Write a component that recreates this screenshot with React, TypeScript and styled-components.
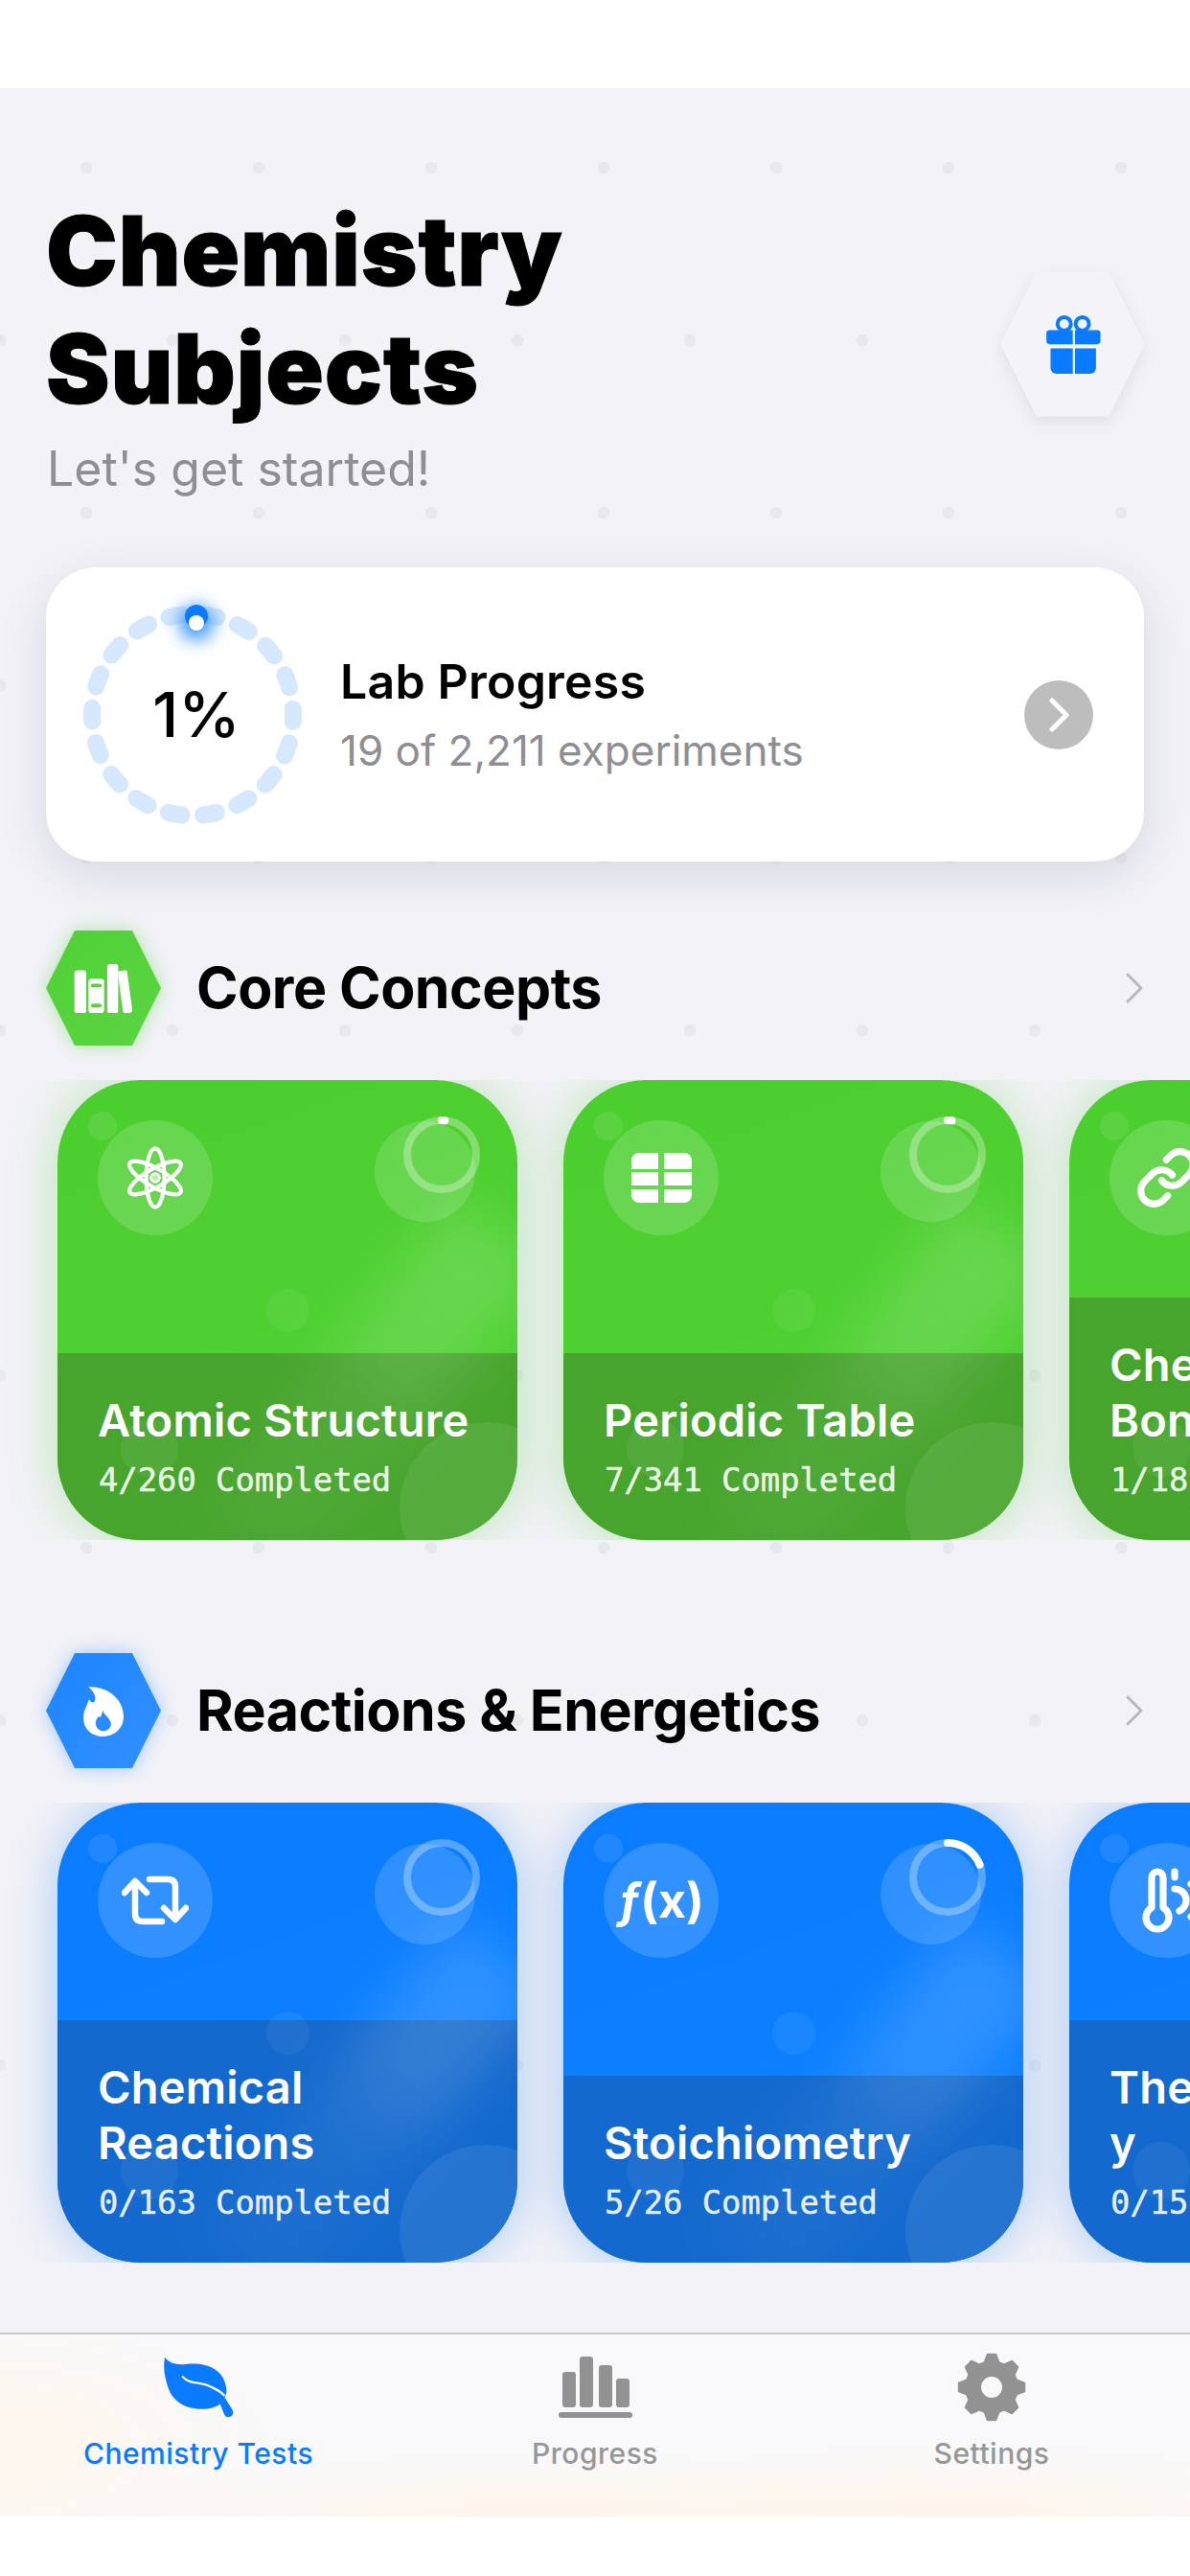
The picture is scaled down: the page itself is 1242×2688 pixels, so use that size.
import React from "react";
import styled, { createGlobalStyle } from "styled-components";
import { Link, ThermometerSun } from "lucide-react";

const Global = createGlobalStyle`
  html, body { margin: 0; padding: 0; background: #fff; }
  * { box-sizing: border-box; }
`;

const sans = `Inter, "Noto Sans", "Liberation Sans", sans-serif`;
const mono = `"DejaVu Sans Mono", "Liberation Mono", monospace`;
const hexClip = "polygon(25% 0, 75% 0, 100% 50%, 75% 100%, 25% 100%, 0 50%)";

const Page = styled.div`
  width: 1242px;
  height: 2688px;
  display: flex;
  flex-direction: column;
  background: #fff;
  padding-top: 92px;
  overflow: hidden;
  font-family: ${sans};
`;
const Main = styled.main`
  height: 2342px;
  padding-top: 108px;
  display: flex;
  flex-direction: column;
  background-color: #f2f2f7;
  background-image:
    radial-gradient(circle at 90px 83px, #e8e8ef 6px, transparent 6.6px),
    radial-gradient(circle at 90px 263px, #e8e8ef 6px, transparent 6.6px);
  background-size: 180px 360px, 180px 360px;
  background-position: 0 0, -90px 0;
`;
const Header = styled.header`
  display: flex;
  align-items: center;
  justify-content: space-between;
  padding: 0 47px 0 48px;
`;
const Title = styled.h1`
  margin: 0;
  font-size: 100px;
  line-height: 123px;
  font-weight: 900;
  letter-spacing: 0.9px;
  -webkit-text-stroke: 1px #000;
  color: #000;
`;
const Subtitle = styled.p`
  margin: 14px 0 0 1px;
  font-size: 50px;
  line-height: 58px;
  font-weight: 400;
  color: #8e8e93;
`;
const HexShadow = styled.div<{ $glow: string }>`
  flex-shrink: 0;
  filter: ${(p) => p.$glow};
`;
const Hex = styled.div<{ $size: number; $bg: string }>`
  width: ${(p) => p.$size}px;
  height: ${(p) => p.$size}px;
  clip-path: ${hexClip};
  background: ${(p) => p.$bg};
  display: flex;
  align-items: center;
  justify-content: center;
`;
const ProgressCard = styled.section`
  margin: 74px 48px 0;
  height: 307px;
  border-radius: 52px;
  background: #fff;
  box-shadow: 0 14px 50px rgba(50, 50, 90, 0.13);
  display: flex;
  align-items: center;
  padding: 0 53px 0 39px;
`;
const RingBox = styled.div`
  position: relative;
  width: 228px;
  height: 228px;
  flex-shrink: 0;
  display: flex;
  align-items: center;
  justify-content: center;
`;
const RingSvg = styled.svg`
  position: absolute;
  inset: 0;
  overflow: visible;
`;
const Percent = styled.span`
  position: relative;
  font-size: 65px;
  font-weight: 500;
  color: #000;
  margin-left: 8px;
`;
const ProgressText = styled.div`
  margin: 2px 0 0 40px;
  flex: 1;
  display: flex;
  flex-direction: column;
`;
const ProgressTitle = styled.div`
  font-size: 50px;
  line-height: 56px;
  font-weight: 600;
  letter-spacing: 0.2px;
  color: #000;
`;
const ProgressSub = styled.div`
  margin-top: 17px;
  font-size: 44px;
  line-height: 54px;
  color: #8e8e93;
`;
const ChevronCircle = styled.div`
  width: 72px;
  height: 72px;
  border-radius: 50%;
  background: #bdbdbd;
  display: flex;
  align-items: center;
  justify-content: center;
`;
const Section = styled.section<{ $top: number }>`
  margin-top: ${(p) => p.$top}px;
`;
const SectionHead = styled.div`
  display: flex;
  align-items: center;
  padding: 0 49px 0 48px;
`;
const SectionTitle = styled.h2`
  margin: 0 0 0 37px;
  font-size: 59px;
  font-weight: 700;
  line-height: 72px;
  letter-spacing: -0.5px;
  color: #000;
`;
const More = styled.svg`
  margin-left: auto;
`;
const Scroller = styled.div`
  margin-top: 36px;
  height: 480px;
  display: flex;
  gap: 48px;
  padding: 0 60px;
  overflow: hidden;
`;
const Card = styled.article<{ $base: string; $glow: string }>`
  position: relative;
  flex: 0 0 480px;
  height: 480px;
  border-radius: 86px;
  overflow: hidden;
  background: ${(p) => p.$base};
  box-shadow: 0 0 50px ${(p) => p.$glow};
  display: flex;
  flex-direction: column;
  padding-top: 42px;
`;
const Sheen = styled.div`
  position: absolute;
  z-index: 1;
  left: 270px;
  top: 110px;
  width: 120px;
  height: 420px;
  transform: rotate(40deg);
  filter: blur(26px);
  background: linear-gradient(
    to bottom,
    rgba(255, 255, 255, 0.15) 0%,
    rgba(255, 255, 255, 0.13) 38%,
    rgba(255, 255, 255, 0.05) 58%,
    rgba(255, 255, 255, 0.03) 100%
  );
`;
const Bubble = styled.div<{ $x: number; $y: number; $d: number; $a: number }>`
  position: absolute;
  z-index: 1;
  left: ${(p) => p.$x}px;
  top: ${(p) => p.$y}px;
  width: ${(p) => p.$d}px;
  height: ${(p) => p.$d}px;
  border-radius: 50%;
  background: rgba(255, 255, 255, ${(p) => p.$a});
`;
const IconCircle = styled.div`
  position: relative;
  z-index: 2;
  margin-left: 42px;
  width: 120px;
  height: 120px;
  border-radius: 50%;
  background: rgba(255, 255, 255, 0.16);
  display: flex;
  align-items: center;
  justify-content: center;
  color: #fff;
`;
const FxLabel = styled.span`
  font-size: 50px;
  font-weight: 700;
  color: #fff;
  white-space: nowrap;
`;
const FlippedIcon = styled.span`
  display: flex;
  transform: translateX(8px) scaleX(-1);
`;
const MiniRing = styled.svg`
  position: absolute;
  z-index: 2;
  left: 361px;
  top: 38px;
`;
const Panel = styled.div<{ $bg: string }>`
  margin-top: auto;
  padding: 41px 30px 42px 42px;
  background: ${(p) => p.$bg};
`;
const CardTitle = styled.h3`
  position: relative;
  z-index: 2;
  margin: 0;
  font-size: 47px;
  line-height: 58px;
  font-weight: 600;
  letter-spacing: 0.2px;
  color: #fff;
  white-space: pre-line;
`;
const CardSub = styled.div`
  position: relative;
  z-index: 2;
  margin: 14px 0 0 1px;
  font-family: ${mono};
  font-size: 33.8px;
  line-height: 40px;
  -webkit-text-stroke: 0.5px rgba(255, 255, 255, 0.88);
  color: rgba(255, 255, 255, 0.88);
  white-space: nowrap;
`;
const TabBar = styled.nav`
  height: 192px;
  border-top: 2px solid #c5c5ca;
  padding-top: 16px;
  display: grid;
  grid-template-columns: repeat(3, 414px);
  background:
    radial-gradient(ellipse 300px 140px at 0 120px, #fff7ec 0%, transparent 100%),
    radial-gradient(ellipse 500px 70px at 560px 192px, #fff6ea 0%, transparent 100%),
    radial-gradient(ellipse 400px 80px at 1000px 192px, #fff6e9 0%, transparent 100%),
    #f9f9fb;
`;
const Tab = styled.div<{ $color: string }>`
  display: flex;
  flex-direction: column;
  align-items: center;
  color: ${(p) => p.$color};
`;
const TabIcon = styled.div`
  height: 78px;
  display: flex;
  align-items: center;
  justify-content: center;
`;
const TabLabel = styled.span`
  margin-top: 12px;
  font-size: 30px;
  line-height: 36px;
  font-weight: 500;
  letter-spacing: 0.5px;
`;

const gearPath = () => {
  const pts: string[] = [];
  const cx = 36, cy = 36, teeth = 8, ro = 34.5, ri = 27;
  for (let i = 0; i < teeth; i++) {
    const a = (i / teeth) * Math.PI * 2 - Math.PI / 2;
    const step = (Math.PI * 2) / teeth;
    const spots: [number, number][] = [
      [ri, a - step * 0.36],
      [ro, a - step * 0.16],
      [ro, a + step * 0.16],
      [ri, a + step * 0.36],
    ];
    spots.forEach(([r, t]) => pts.push(`${(cx + r * Math.cos(t)).toFixed(2)} ${(cy + r * Math.sin(t)).toFixed(2)}`));
  }
  const hole = "M36 24a12 12 0 1 0 0 24a12 12 0 1 0 0-24Z";
  return `M${pts.join("L")}Z ${hole}`;
};

const Gift = () => (
  <svg width="58" height="62" viewBox="150 148 172 187" fill="#0a7aff">
    <circle cx="208" cy="178" r="21" fill="none" stroke="#0a7aff" strokeWidth="12" />
    <circle cx="265" cy="178" r="21" fill="none" stroke="#0a7aff" strokeWidth="12" />
    <path d="M162 198h73v44h-73a10 10 0 0 1-10-10v-24a10 10 0 0 1 10-10Z" />
    <path d="M242 198h70a10 10 0 0 1 10 10v24a10 10 0 0 1-10 10h-70Z" />
    <path d="M165 255h70v80h-52a18 18 0 0 1-18-18Z" />
    <path d="M242 255h66v62a18 18 0 0 1-18 18h-48Z" />
  </svg>
);
const Books = () => (
  <svg width="62" height="55" viewBox="108 132 190 163" fill="#fff">
    <rect x="110" y="155" width="38" height="137" rx="9" />
    <path fillRule="evenodd" d="M165 182h30a10 10 0 0 1 10 10v90a10 10 0 0 1-10 10h-30a10 10 0 0 1-10-10v-90a10 10 0 0 1 10-10ZM172 198a8 5 0 0 0 0 12h16a8 5 0 0 0 0-12ZM172 262a8 5 0 0 0 0 12h16a8 5 0 0 0 0-12Z" />
    <rect x="215" y="135" width="35" height="157" rx="9" />
    <path d="M250 158l20-3a8 8 0 0 1 9 7l16 120a8 8 0 0 1-7 9l-14 1a8 8 0 0 1-9-7l-15-110Z" />
  </svg>
);
const Flame = () => (
  <svg width="42" height="53" viewBox="139 129 127 160" fill="#fff">
    <path fillRule="evenodd" d="M155 133C205 128 266 165 266 226C266 265 236 289 201 289C165 289 139 265 139 230C139 208 150 194 157 172C165 184 172 186 176 174C179 160 170 146 155 133ZM200 205C204 224 226 230 226 250C226 264 213 272 202 272C190 272 178 263 178 247C178 237 183 231 187 226C191 232 197 226 200 205Z" />
  </svg>
);
const Atom = () => (
  <svg width="66" height="72" viewBox="86 86 192 212" fill="none" stroke="#fff" strokeWidth="12.5">
    <ellipse cx="182" cy="192" rx="28" ry="90" />
    <ellipse cx="182" cy="192" rx="28" ry="90" transform="rotate(60 182 192)" />
    <ellipse cx="182" cy="192" rx="28" ry="90" transform="rotate(-60 182 192)" />
    <circle cx="182" cy="192" r="13" fill="rgba(255,255,255,.55)" strokeWidth="8" />
  </svg>
);
const TableCells = () => (
  <svg width="63" height="52" viewBox="0 0 63 52" fill="#fff">
    <path d="M8 0h20v17H0V8a8 8 0 0 1 8-8Z" />
    <path d="M34 0h21a8 8 0 0 1 8 8v9H34Z" />
    <rect x="0" y="20" width="28" height="14" />
    <rect x="34" y="20" width="29" height="14" />
    <path d="M0 38h28v14H8a8 8 0 0 1-8-8Z" />
    <path d="M34 38h29v6a8 8 0 0 1-8 8H34Z" />
  </svg>
);
const Cycle = () => (
  <svg width="70" height="52" viewBox="0 0 70 52" fill="none" stroke="#fff" strokeWidth="6.5" strokeLinecap="round" strokeLinejoin="round">
    <path d="M3 18L14 6L26 18" />
    <path d="M14 7V40Q14 48 22 48H42" />
    <path d="M29 4H48Q56 4 56 12V45" />
    <path d="M44 34L56 46L67 34" />
  </svg>
);
const Leaf = () => (
  <svg width="74" height="64" viewBox="58 46 222 194">
    <path fill="#0a7aff" d="M63 48C75 66 100 73 130 70C185 63 252 80 258 150C259 160 256 168 252 175L277 215C282 226 276 238 264 238C256 238 252 232 248 222L238 196C225 206 205 212 180 212C125 212 85 185 72 140C62 110 57 78 63 48Z" />
    <path fill="none" stroke="#fbfafa" strokeWidth="7" strokeLinecap="round" d="M120 110C140 135 175 125 205 140C225 150 240 155 250 168" />
  </svg>
);
const Chart = () => (
  <svg width="77" height="64" viewBox="0 0 77 64" fill="#929292">
    <rect x="4" y="16" width="14" height="37" rx="3" />
    <rect x="22" y="0" width="14" height="53" rx="3" />
    <rect x="42" y="9" width="14" height="44" rx="3" />
    <rect x="60" y="23" width="14" height="30" rx="3" />
    <rect x="0" y="58" width="77" height="6" rx="3" />
  </svg>
);
const Gear = () => (
  <svg width="72" height="72" viewBox="0 0 72 72">
    <path fillRule="evenodd" d={gearPath()} fill="#929292" stroke="#929292" strokeWidth="2" strokeLinejoin="round" />
  </svg>
);
const MoreChevron = () => (
  <More width="18" height="32" viewBox="0 0 18 32" fill="none" stroke="#b9b9bd" strokeWidth="3" strokeLinecap="round" strokeLinejoin="round">
    <path d="M2 2L16 16L2 30" />
  </More>
);

const RING_R = 105;
const RING_C = 2 * Math.PI * RING_R;
const Ring = () => (
  <RingSvg width="228" height="228" viewBox="0 0 228 228">
    <defs>
      <filter id="beadGlow" x="-100%" y="-100%" width="300%" height="300%">
        <feGaussianBlur stdDeviation="9" />
      </filter>
    </defs>
    <circle
      cx="114"
      cy="114"
      r={RING_R}
      fill="none"
      stroke="#d6e8fd"
      strokeWidth="18"
      strokeLinecap="round"
      strokeDasharray={`14 ${RING_C / 18 - 14}`}
      strokeDashoffset="7"
    />
    <circle cx="118" cy="18" r="18" fill="#3d97ff" filter="url(#beadGlow)" />
    <circle cx="118" cy="11" r="12" fill="#0a7aff" />
    <circle cx="118" cy="18" r="8" fill="#fff" />
  </RingSvg>
);

const Progress = ({ value }: { value: number }) => {
  const r = 36;
  const c = 2 * Math.PI * r;
  const arc = Math.max(value * c, 0);
  return (
    <MiniRing width="80" height="80" viewBox="0 0 80 80" fill="none" strokeWidth="8">
      <circle cx="40" cy="40" r={r} stroke="rgba(255,255,255,.3)" />
      {arc > 0 && (
        <circle
          cx="40"
          cy="40"
          r={r}
          stroke="#fff"
          strokeLinecap="round"
          strokeDasharray={`${arc} ${c}`}
          transform="rotate(-90 40 40)"
        />
      )}
    </MiniRing>
  );
};

type Item = { title: string; sub: string; value: number; icon: React.ReactNode };

const green = {
  base: "linear-gradient(160deg, #4bcf2e 0%, #50d133 100%)",
  glow: "rgba(80, 205, 50, 0.34)",
  panel: "#47a52d",
};
const blue = {
  base: "linear-gradient(160deg, #0a7cff 0%, #0d82ff 100%)",
  glow: "rgba(20, 125, 250, 0.34)",
  panel: "#1369cd",
};

const coreItems: Item[] = [
  { title: "Atomic Structure", sub: "4/260 Completed", value: 0.015, icon: <Atom /> },
  { title: "Periodic Table", sub: "7/341 Completed", value: 0.02, icon: <TableCells /> },
  { title: "Chemical Bonding", sub: "1/189 Completed", value: 0.005, icon: <Link size={66} strokeWidth={2.6} /> },
];
const reactionItems: Item[] = [
  { title: "Chemical Reactions", sub: "0/163 Completed", value: 0, icon: <Cycle /> },
  { title: "Stoichiometry", sub: "5/26 Completed", value: 0.19, icon: <FxLabel><i>ƒ</i>(x)</FxLabel> },
  {
    title: "Thermochemistr\ny",
    sub: "0/155 Completed",
    value: 0,
    icon: (
      <FlippedIcon>
        <ThermometerSun size={72} strokeWidth={2.4} />
      </FlippedIcon>
    ),
  },
];

const Row = ({ items, theme }: { items: Item[]; theme: typeof green }) => (
  <Scroller>
    {items.map((it) => (
      <Card key={it.sub} $base={theme.base} $glow={theme.glow}>
        <IconCircle>{it.icon}</IconCircle>
        <Panel $bg={theme.panel}>
          <CardTitle>{it.title}</CardTitle>
          <CardSub>{it.sub}</CardSub>
        </Panel>
        <Sheen />
        <Bubble $x={32} $y={33} $d={30} $a={0.09} />
        <Bubble $x={218} $y={218} $d={45} $a={0.06} />
        <Bubble $x={66} $y={354} $d={60} $a={0.06} />
        <Bubble $x={357} $y={357} $d={180} $a={0.08} />
        <Bubble $x={331} $y={43} $d={105} $a={0.15} />
        <Progress value={it.value} />
      </Card>
    ))}
  </Scroller>
);

export default function App() {
  return (
    <Page>
      <Global />
      <Main>
        <Header>
          <div>
            <Title>
              Chemistry
              <br />
              Subjects
            </Title>
            <Subtitle>Let's get started!</Subtitle>
          </div>
          <HexShadow $glow="drop-shadow(0 6px 8px rgba(40,40,80,.09))">
            <Hex $size={151} $bg="#f3f3f8">
              <Gift />
            </Hex>
          </HexShadow>
        </Header>

        <ProgressCard>
          <RingBox>
            <Ring />
            <Percent>1%</Percent>
          </RingBox>
          <ProgressText>
            <ProgressTitle>Lab Progress</ProgressTitle>
            <ProgressSub>19 of 2,211 experiments</ProgressSub>
          </ProgressText>
          <ChevronCircle>
            <svg width="24" height="38" viewBox="0 0 24 38" fill="none" stroke="#fff" strokeWidth="5" strokeLinecap="round" strokeLinejoin="round">
              <path d="M5 4L20 19L5 34" />
            </svg>
          </ChevronCircle>
        </ProgressCard>

        <Section $top={72}>
          <SectionHead>
            <HexShadow $glow="drop-shadow(0 0 9px rgba(85,210,60,.45))">
              <Hex $size={120} $bg="linear-gradient(135deg,#4fd034,#5cd544)">
                <Books />
              </Hex>
            </HexShadow>
            <SectionTitle>Core Concepts</SectionTitle>
            <MoreChevron />
          </SectionHead>
          <Row items={coreItems} theme={green} />
        </Section>

        <Section $top={118}>
          <SectionHead>
            <HexShadow $glow="drop-shadow(0 0 9px rgba(30,130,255,.4))">
              <Hex $size={120} $bg="linear-gradient(135deg,#1c85ff,#3290ff)">
                <Flame />
              </Hex>
            </HexShadow>
            <SectionTitle>Reactions &amp; Energetics</SectionTitle>
            <MoreChevron />
          </SectionHead>
          <Row items={reactionItems} theme={blue} />
        </Section>
      </Main>
      <TabBar>
        <Tab $color="#0a7aff">
          <TabIcon><Leaf /></TabIcon>
          <TabLabel>Chemistry Tests</TabLabel>
        </Tab>
        <Tab $color="#979797">
          <TabIcon><Chart /></TabIcon>
          <TabLabel>Progress</TabLabel>
        </Tab>
        <Tab $color="#979797">
          <TabIcon><Gear /></TabIcon>
          <TabLabel>Settings</TabLabel>
        </Tab>
      </TabBar>
    </Page>
  );
}
